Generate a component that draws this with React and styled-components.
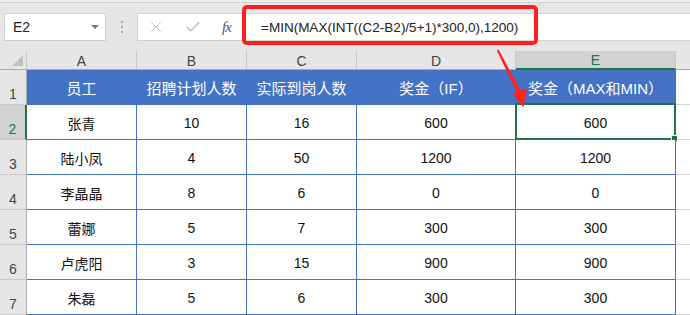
import React from "react";
import styled, { createGlobalStyle } from "styled-components";
import { X, Check } from "lucide-react";

const GlobalStyle = createGlobalStyle`
  body {
    margin: 0;
    background: #ffffff;
    overflow: hidden;
  }
`;

const Page = styled.div`
  position: relative;
  width: 690px;
  height: 315px;
  overflow: hidden;
  font-family: "Liberation Sans", "Noto Sans CJK SC", sans-serif;
  background: #ffffff;
`;

const Toolbar = styled.div`
  display: flex;
  align-items: flex-start;
  height: 51px;
  box-sizing: border-box;
  padding: 13px 0 0 4px;
  background: linear-gradient(#ededed 0 2px, #d2d2d2 2px 3px, #e6e6e6 3px);
`;

const NameBox = styled.div`
  display: flex;
  align-items: center;
  justify-content: space-between;
  width: 102px;
  height: 28px;
  box-sizing: border-box;
  padding: 0 6px 0 8px;
  background: #ffffff;
  border: 1px solid #d0d0d0;
  font-size: 14px;
  color: #222;
`;

const DropArrow = styled.span`
  width: 0;
  height: 0;
  border-left: 4px solid transparent;
  border-right: 4px solid transparent;
  border-top: 4px solid #777;
`;

const DotSep = styled.div`
  display: flex;
  flex-direction: column;
  align-items: center;
  justify-content: center;
  gap: 3px;
  width: 31px;
  height: 28px;
`;

const Dot = styled.span`
  width: 2px;
  height: 2px;
  background: #a8a8a8;
`;

const FuncBox = styled.div`
  display: flex;
  align-items: center;
  width: 106px;
  height: 28px;
  box-sizing: border-box;
  padding-left: 9px;
  gap: 19px;
  background: #ffffff;
  border: 1px solid #d0d0d0;
  border-right: none;
  color: #b8b8b8;
`;

const Fx = styled.span`
  margin-left: 1px;
  font-family: "Liberation Serif", serif;
  font-style: italic;
  font-size: 15px;
  color: #555;
  letter-spacing: -1px;
`;

const FormulaField = styled.div`
  flex: 1;
  display: flex;
  align-items: center;
  height: 28px;
  box-sizing: border-box;
  padding-left: 18px;
  background: #ffffff;
  border-top: 1px solid #d4d4d4;
  border-bottom: 1px solid #d4d4d4;
  font-size: 13.5px;
  color: #222;
  white-space: nowrap;
`;

const Sheet = styled.div`
  display: grid;
  grid-template-columns: 27px 110px 110px 110px 159px 160px 1fr;
  grid-template-rows: 19px repeat(7, 35px);
`;

const Corner = styled.div`
  position: relative;
  background: #e6e6e6;
  border-right: 1px solid #c8c8c8;
  border-bottom: 1px solid #ababab;

  &::after {
    content: "";
    position: absolute;
    right: 3px;
    bottom: 3px;
    width: 0;
    height: 0;
    border-left: 11px solid transparent;
    border-bottom: 11px solid #c2c2c2;
  }
`;

const ColHead = styled.div`
  display: flex;
  align-items: center;
  justify-content: center;
  box-sizing: border-box;
  font-size: 14px;
  background: ${(p) => (p.$active ? "#d2d2d2" : "#e6e6e6")};
  color: ${(p) => (p.$active ? "#217346" : "#444")};
  border-right: 1px solid #c8c8c8;
  border-bottom: ${(p) => (p.$active ? "2px solid #217346" : "1px solid #ababab")};
  padding-top: 1px;
`;

const RowHead = styled.div`
  display: flex;
  align-items: flex-end;
  justify-content: center;
  box-sizing: border-box;
  padding-bottom: 1px;
  font-size: 14px;
  line-height: 17px;
  background: ${(p) => (p.$active ? "#d2d2d2" : "#e6e6e6")};
  color: ${(p) => (p.$active ? "#217346" : "#444")};
  border-right: ${(p) => (p.$active ? "2px solid #217346" : "1px solid #ababab")};
  border-bottom: 1px solid #c8c8c8;
`;

const HeadCell = styled.div`
  display: flex;
  align-items: center;
  justify-content: center;
  box-sizing: border-box;
  background: #4472c4;
  color: #ffffff;
  font-size: 15px;
  border-right: 1px solid #4472c4;
  border-bottom: 1px solid #4472c4;
  white-space: nowrap;
`;

const DataCell = styled.div`
  position: relative;
  display: flex;
  align-items: center;
  justify-content: center;
  box-sizing: border-box;
  padding-top: 2px;
  font-size: 14px;
  color: #111;
  background: #ffffff;
  border-right: 1px solid #4472c4;
  border-bottom: 1px solid #4472c4;
`;

const Filler = styled.div`
  box-sizing: border-box;
  background: ${(p) => (p.$head ? "#e6e6e6" : "#ffffff")};
  border-bottom: 1px solid ${(p) => (p.$head ? "#ababab" : "#d4d4d4")};
`;

const Selection = styled.div`
  position: absolute;
  top: -2px;
  left: -1px;
  right: -1px;
  bottom: -1px;
  border: 2px solid #217346;
  pointer-events: none;
`;

const FillHandle = styled.div`
  position: absolute;
  right: -4px;
  bottom: -4px;
  width: 5px;
  height: 5px;
  background: #217346;
  border: 1px solid #ffffff;
`;

const RedBox = styled.div`
  position: absolute;
  left: 242px;
  top: 5px;
  width: 296px;
  height: 40px;
  box-sizing: border-box;
  border: 4px solid #ff1f1f;
  border-radius: 5px;
  pointer-events: none;
`;

const ArrowLayer = styled.svg`
  position: absolute;
  left: 0;
  top: 0;
  pointer-events: none;
`;

const columns = ["A", "B", "C", "D", "E"];
const headers = ["员工", "招聘计划人数", "实际到岗人数", "奖金（IF）", "奖金（MAX和MIN）"];
const rows = [
  ["张青", 10, 16, 600, 600],
  ["陆小凤", 4, 50, 1200, 1200],
  ["李晶晶", 8, 6, 0, 0],
  ["蕾娜", 5, 7, 300, 300],
  ["卢虎阳", 3, 15, 900, 900],
  ["朱磊", 5, 6, 300, 300],
];

export default function App() {
  return (
    <Page>
      <GlobalStyle />
      <Toolbar>
        <NameBox>
          E2
          <DropArrow />
        </NameBox>
        <DotSep>
          <Dot />
          <Dot />
          <Dot />
        </DotSep>
        <FuncBox>
          <X size={18} strokeWidth={1.2} />
          <Check size={18} strokeWidth={1.5} />
          <Fx>fx</Fx>
        </FuncBox>
        <FormulaField>=MIN(MAX(INT((C2-B2)/5+1)*300,0),1200)</FormulaField>
      </Toolbar>

      <Sheet>
        <Corner />
        {columns.map((c) => (
          <ColHead key={c} $active={c === "E"}>{c}</ColHead>
        ))}
        <Filler $head />

        <RowHead>1</RowHead>
        {headers.map((h) => (
          <HeadCell key={h}>{h}</HeadCell>
        ))}
        <Filler />

        {rows.map((r, i) => (
          <React.Fragment key={i}>
            <RowHead $active={i === 0}>{i + 2}</RowHead>
            {r.map((v, j) => (
              <DataCell key={j}>
                {v}
                {i === 0 && j === 4 && (
                  <Selection>
                    <FillHandle />
                  </Selection>
                )}
              </DataCell>
            ))}
            <Filler />
          </React.Fragment>
        ))}
      </Sheet>

      <RedBox />
      <ArrowLayer width="690" height="315" viewBox="0 0 690 315">
        <polygon
          points="496.8,50.4 498.6,49.6 520.3,90.1 527,89 523.5,107.5 512.5,93.5 516.7,91.9"
          fill="#ff2417"
        />
      </ArrowLayer>
    </Page>
  );
}
